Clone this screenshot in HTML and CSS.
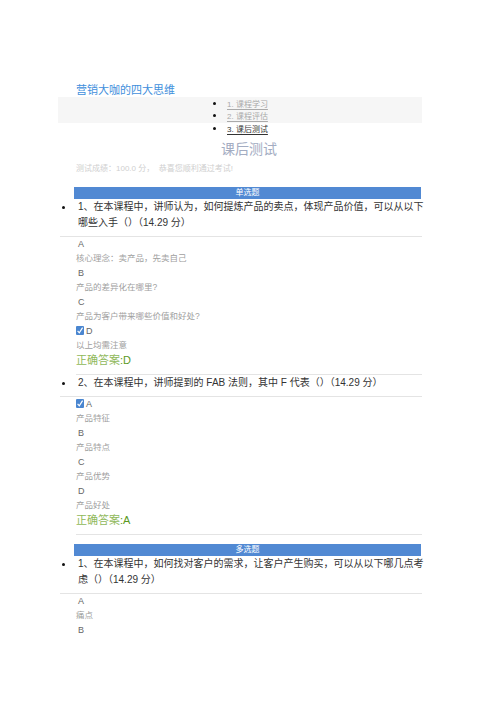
FILE: index.html
```html
<!DOCTYPE html>
<html lang="zh-CN">
<head>
    <meta charset="UTF-8">
    <meta name="viewport" content="width=device-width, initial-scale=1.0">
    <title>课后测试 - 营销大咖的四大思维</title>
    <link rel="stylesheet" href="styles.css">
</head>
<body>
    <div class="page">
        <!-- Course title -->
        <h1 class="course">营销大咖的四大思维</h1>

        <!-- Steps -->
        <div class="steps">
            <ul>
                <li class="step"><a href="#">1. 课程学习</a></li>
                <li class="step"><a href="#">2. 课程评估</a></li>
                <li class="step current"><a href="#">3. 课后测试</a></li>
            </ul>
        </div>

        <h2 class="test-title">课后测试</h2>
        <p class="score">测试成绩：100.0 分，  恭喜您顺利通过考试!</p>

        <!-- Single choice -->
        <div class="section">
            <div class="section-bar">单选题</div>
            <ul class="questions">
                <li class="question">
                    <div class="q-head">
                        <span class="dot"></span>
                        <p class="q-text">1、在本课程中，讲师认为，如何提炼产品的卖点，体现产品价值，可以从以下哪些入手（）（14.29 分）</p>
                    </div>
                    <div class="options">
                        <div class="opt-letter">A</div>
                        <div class="opt-desc">核心理念：卖产品，先卖自己</div>
                        <div class="opt-letter">B</div>
                        <div class="opt-desc">产品的差异化在哪里?</div>
                        <div class="opt-letter">C</div>
                        <div class="opt-desc">产品为客户带来哪些价值和好处?</div>
                        <div class="opt-letter checked">
                            <svg class="check" width="8" height="9" viewBox="0 0 8 9"><rect x="0" y="0" width="8" height="9" rx="1" fill="#4a86d0"/><path d="M1.6 4.8 L3.3 6.8 L6.6 1.6" fill="none" stroke="#fff" stroke-width="1.2"/></svg>
                            D
                        </div>
                        <div class="opt-desc">以上均需注意</div>
                        <div class="answer">正确答案<span>:D</span></div>
                    </div>
                </li>
                <li class="question">
                    <div class="q-head">
                        <span class="dot"></span>
                        <p class="q-text">2、在本课程中，讲师提到的 FAB 法则，其中 F 代表（）（14.29 分）</p>
                    </div>
                    <div class="options">
                        <div class="opt-letter checked">
                            <svg class="check" width="8" height="9" viewBox="0 0 8 9"><rect x="0" y="0" width="8" height="9" rx="1" fill="#4a86d0"/><path d="M1.6 4.8 L3.3 6.8 L6.6 1.6" fill="none" stroke="#fff" stroke-width="1.2"/></svg>
                            A
                        </div>
                        <div class="opt-desc">产品特征</div>
                        <div class="opt-letter">B</div>
                        <div class="opt-desc">产品特点</div>
                        <div class="opt-letter">C</div>
                        <div class="opt-desc">产品优势</div>
                        <div class="opt-letter">D</div>
                        <div class="opt-desc">产品好处</div>
                        <div class="answer">正确答案<span>:A</span></div>
                    </div>
                </li>
            </ul>
        </div>

        <!-- Multiple choice -->
        <div class="section">
            <div class="section-bar">多选题</div>
            <ul class="questions">
                <li class="question">
                    <div class="q-head">
                        <span class="dot"></span>
                        <p class="q-text">1、在本课程中，如何找对客户的需求，让客户产生购买，可以从以下哪几点考虑（）（14.29 分）</p>
                    </div>
                    <div class="options open">
                        <div class="opt-letter">A</div>
                        <div class="opt-desc">痛点</div>
                        <div class="opt-letter">B</div>
                    </div>
                </li>
            </ul>
        </div>
    </div>
</body>
</html>
```

FILE: styles.css
```css
* {
    margin: 0;
    padding: 0;
    box-sizing: border-box;
}

body {
    background: #fff;
    font-family: 'Liberation Sans', 'Noto Sans CJK SC', sans-serif;
    color: #333;
}

.page {
    width: 422px;
    padding: 83px 0 0 60px;
}

.course {
    padding-left: 16px;
    font-size: 11px;
    line-height: 14px;
    font-weight: normal;
    color: #3f8fdc;
}

/* steps */
.steps {
    margin-left: -2px;
    background: linear-gradient(#f6f6f6 0, #f6f6f6 26px, transparent 26px);
}

.steps ul {
    list-style: none;
    padding-left: 155px;
}

.step {
    display: flex;
    align-items: center;
    gap: 11px;
    height: 12.5px;
    font-size: 8px;
}

.step::before {
    content: '';
    width: 3px;
    height: 3px;
    border-radius: 50%;
    background: #111;
}

.step a {
    color: #aaa;
    text-decoration: underline;
    text-underline-offset: 2px;
}

.step.current a {
    color: #333;
}

.test-title {
    margin-top: 4px;
    padding-left: 16px;
    text-align: center;
    font-size: 14px;
    line-height: 20px;
    font-weight: normal;
    color: #a3acc2;
}

.score {
    margin-top: 4px;
    padding-left: 16px;
    font-size: 8px;
    line-height: 12px;
    color: #cfcfcf;
    white-space: pre;
}

/* sections */
.section {
    margin-top: 12px;
}

.section + .section {
    margin-top: 9px;
}

.section-bar {
    margin-left: 14px;
    width: 347px;
    height: 12px;
    background: #5189d3;
    color: #fff;
    font-size: 8px;
    line-height: 12px;
    text-align: center;
}

.questions {
    list-style: none;
}

.q-head {
    display: flex;
    align-items: flex-start;
    padding-bottom: 5px;
    border-bottom: 1px solid #e4e4e4;
}

.dot {
    flex: none;
    width: 3px;
    height: 3px;
    margin: 7px 13px 0 2px;
    border-radius: 50%;
    background: #111;
}

.q-text {
    flex: 1;
    margin-right: -3px;
    font-size: 10px;
    line-height: 16px;
    color: #333;
}

.options {
    margin-left: 16px;
    padding-bottom: 6px;
    border-bottom: 1px solid #e4e4e4;
}

.options.open {
    border-bottom: none;
}

.opt-letter {
    display: flex;
    align-items: center;
    gap: 2px;
    height: 14px;
    padding-left: 2px;
    font-size: 9px;
    color: #666;
}

.opt-letter.checked {
    padding-left: 0;
}

.check {
    flex: none;
}

.opt-desc {
    height: 15px;
    line-height: 15px;
    font-size: 8.5px;
    color: #a0a0a0;
}

.answer {
    height: 15px;
    line-height: 15px;
    font-size: 11px;
    color: #8fb859;
}

.answer span {
    color: #5b9a1e;
}
```
